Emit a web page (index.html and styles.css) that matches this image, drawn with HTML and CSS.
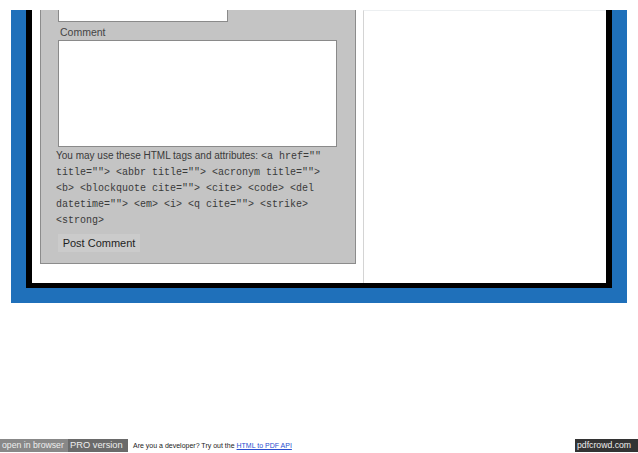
FILE: index.html
```html
<!DOCTYPE html>
<html lang="en">
<head>
    <meta charset="UTF-8">
    <title>Leave a Reply</title>
    <link rel="stylesheet" href="styles.css">
</head>
<body>
    <div class="frame">
        <div class="page">
            <div class="main">
                <div class="respond">
                    <div class="field-input"></div>
                    <label class="field-label" for="comment">Comment</label>
                    <textarea id="comment" class="field-text"></textarea>
                    <p class="allowed">You may use these HTML tags and attributes: <code>&lt;a href=""</code><br><code>title=""&gt; &lt;abbr title=""&gt; &lt;acronym title=""&gt;</code><br><code>&lt;b&gt; &lt;blockquote cite=""&gt; &lt;cite&gt; &lt;code&gt; &lt;del</code><br><code>datetime=""&gt; &lt;em&gt; &lt;i&gt; &lt;q cite=""&gt; &lt;strike&gt;</code><br><code>&lt;strong&gt;</code></p>
                    <button class="submit">Post Comment</button>
                </div>
            </div>
            <div class="sidebar"></div>
        </div>
    </div>

    <div class="footer">
        <span class="btn-open">open in browser</span>
        <span class="btn-pro">PRO version</span>
        <span class="promo">Are you a developer? Try out the <a href="#">HTML to PDF API</a></span>
        <span class="brand">pdfcrowd.com</span>
    </div>
</body>
</html>
```

FILE: styles.css
```css
html, body {
    margin: 0;
    height: 100%;
}
body {
    display: flex;
    flex-direction: column;
    background-color: #fff;
    font-family: 'Liberation Sans', Arial, sans-serif;
    color: #3a3a3a;
    padding-top: 10px;
    box-sizing: border-box;
}
.frame {
    margin-left: 11px;
    width: 616px;
    padding: 0 15px 15px 15px;
    box-sizing: border-box;
    background-color: #1f70ba;
}
.page {
    display: flex;
    height: 278px;
    background-color: #fff;
    border: 6px solid #000;
    border-top: none;
    border-bottom-width: 5px;
    box-sizing: border-box;
}
.main {
    width: 331px;
    padding: 0 7px 0 8px;
    box-sizing: border-box;
}
.sidebar {
    flex: 1;
    border-left: 1px solid #d4d4d4;
    border-top: 1px solid #eceff1;
}
.respond {
    height: 254px;
    background-color: #c4c4c4;
    border: 1px solid #8c8c8c;
    border-top: none;
    padding-left: 17px;
    box-sizing: border-box;
}
.field-input {
    width: 170px;
    height: 12px;
    background-color: #fff;
    border: 1px solid #8a8a8a;
    border-top: none;
    box-sizing: border-box;
}
.field-label {
    display: block;
    margin: 3px 0 1px 2px;
    font-size: 10.5px;
    line-height: 14px;
    color: #444;
}
.field-text {
    display: block;
    width: 279px;
    height: 107px;
    margin: 0;
    padding: 0;
    border: 1px solid #8a8a8a;
    background-color: #fff;
    box-sizing: border-box;
    resize: none;
}
.allowed {
    margin: 1px 0 0 -2px;
    font-size: 10px;
    line-height: 16px;
    white-space: nowrap;
    color: #3a3a3a;
}
.allowed code {
    font-family: 'Liberation Mono', 'Courier New', monospace;
    font-size: 10px;
    line-height: 1;
}
.submit {
    display: block;
    margin-top: 6px;
    width: 82px;
    height: 18px;
    padding: 0;
    border: none;
    background-color: #cbcbcb;
    font-family: 'Liberation Sans', Arial, sans-serif;
    font-size: 11px;
    color: #1e1e1e;
}
.footer {
    margin-top: auto;
    margin-bottom: 1px;
    display: flex;
    align-items: center;
    height: 13px;
    font-size: 9px;
    white-space: nowrap;
}
.btn-open, .btn-pro, .brand {
    height: 13px;
    line-height: 13px;
    color: #eee;
    padding: 0 2px;
    font-size: 8.7px;
    box-sizing: border-box;
    overflow: hidden;
}
.btn-open {
    width: 68px;
    background-color: #888;
}
.btn-pro {
    width: 60px;
    background-color: #6a6a6a;
    font-size: 9.3px;
}
.promo {
    margin-left: 5px;
    font-size: 7px;
    color: #222;
}
.promo a {
    color: #2a4fd0;
}
.brand {
    margin-left: auto;
    width: 63px;
    background-color: #333;
}
```
